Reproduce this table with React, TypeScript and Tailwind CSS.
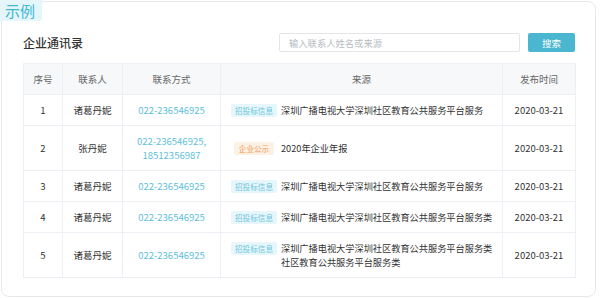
import React from "react";

type Tag = "bid" | "notice";

interface Row {
  no: number;
  name: string;
  phones: string[];
  tag: Tag;
  source: string[];
  date: string;
}

const rows: Row[] = [
  { no: 1, name: "诸葛丹妮", phones: ["022-236546925"], tag: "bid", source: ["深圳广播电视大学深圳社区教育公共服务平台服务"], date: "2020-03-21" },
  { no: 2, name: "张丹妮", phones: ["022-236546925,", "18512356987"], tag: "notice", source: ["2020年企业年报"], date: "2020-03-21" },
  { no: 3, name: "诸葛丹妮", phones: ["022-236546925"], tag: "bid", source: ["深圳广播电视大学深圳社区教育公共服务平台服务"], date: "2020-03-21" },
  { no: 4, name: "诸葛丹妮", phones: ["022-236546925"], tag: "bid", source: ["深圳广播电视大学深圳社区教育公共服务平台服务类"], date: "2020-03-21" },
  { no: 5, name: "诸葛丹妮", phones: ["022-236546925"], tag: "bid", source: ["深圳广播电视大学深圳社区教育公共服务平台服务类", "社区教育公共服务平台服务类"], date: "2020-03-21" },
];

function SourceTag({ tag }: { tag: Tag }) {
  return (
    <div className="w-[54px] shrink-0 flex justify-center pt-[1px]">
      {tag === "bid" ? (
        <span className="px-[4px] h-[13px] flex items-center bg-[#e7f6fb] text-[#6ec6e0] text-[7.6px] leading-none rounded-[2px]">
          招投标信息
        </span>
      ) : (
        <span className="px-[5px] h-[13px] flex items-center bg-[#fdf0e4] text-[#f0a15a] text-[7.6px] leading-none rounded-[2px]">
          企业公示
        </span>
      )}
    </div>
  );
}

export default function App() {
  const cell = "border border-[#eceff3] py-2 text-center align-middle";
  return (
    <div
      className="w-[600px] h-[298px] bg-white relative p-[1px] text-[9.5px] leading-[14px] text-[#333]"
      style={{ fontFamily: '"Noto Sans CJK SC", "Noto Sans", sans-serif' }}
    >
      <div className="absolute left-0 top-0 w-[42px] h-[21px] bg-[#e4f6fa] text-[#3fb7d2] text-[15px] leading-[21px] pl-[5px] rounded-br-[3px]">
        示例
      </div>
      <div className="w-[595px] h-[296px] border border-[#e6e8eb] rounded-[8px] pl-[21px] pr-[20px] pt-[31px]">
        <div className="flex items-center h-[19px]">
          <div className="text-[12px] font-medium text-[#333] leading-none">企业通讯录</div>
          <div className="ml-auto w-[241px] h-[19px] border border-[#e3e5e8] rounded-[2px] flex items-center pl-[9px] text-[9.3px] text-[#b8bcc2]">
            输入联系人姓名或来源
          </div>
          <div className="ml-[8px] w-[47px] h-[19px] bg-[#4bb6cf] rounded-[2px] text-white flex items-center justify-center">
            搜索
          </div>
        </div>
        <table className="mt-[11px] w-[552px] border-collapse table-fixed">
          <colgroup>
            <col className="w-[39px]" />
            <col className="w-[60px]" />
            <col className="w-[98px]" />
            <col className="w-[282px]" />
            <col className="w-[73px]" />
          </colgroup>
          <thead>
            <tr className="bg-[#f6f8fa] text-[#666]">
              <th className={`${cell} font-normal`}>序号</th>
              <th className={`${cell} font-normal`}>联系人</th>
              <th className={`${cell} font-normal`}>联系方式</th>
              <th className={`${cell} font-normal`}>来源</th>
              <th className={`${cell} font-normal`}>发布时间</th>
            </tr>
          </thead>
          <tbody>
            {rows.map((r) => (
              <tr key={r.no}>
                <td className={cell}>{r.no}</td>
                <td className={cell}>{r.name}</td>
                <td className={`${cell} text-[#5ec0dc]`}>
                  {r.phones.map((p) => (
                    <div key={p}>{p}</div>
                  ))}
                </td>
                <td className="border border-[#eceff3] py-2 pl-[6px] align-middle">
                  <div className="flex items-start">
                    <SourceTag tag={r.tag} />
                    <div className="text-[9.2px]">
                      {r.source.map((s) => (
                        <div key={s}>{s}</div>
                      ))}
                    </div>
                  </div>
                </td>
                <td className={cell}>{r.date}</td>
              </tr>
            ))}
          </tbody>
        </table>
      </div>
    </div>
  );
}
